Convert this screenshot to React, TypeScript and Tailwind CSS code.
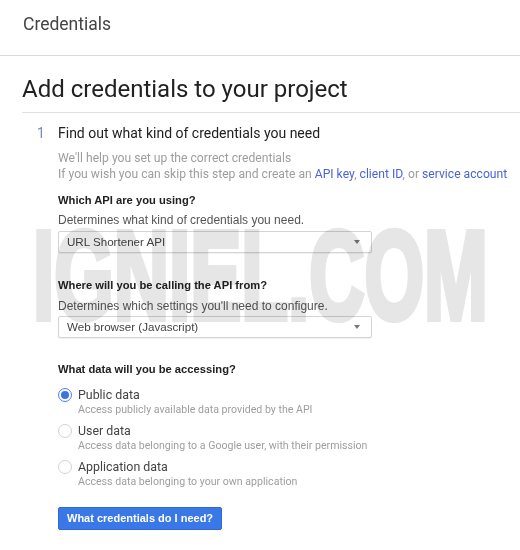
import React from 'react';

const roboto = "font-['Roboto','Liberation_Sans',sans-serif]";
const arial = "font-['Liberation_Sans','Arial',sans-serif]";

const dataOptions = [
  { label: 'Public data', desc: 'Access publicly available data provided by the API', checked: true },
  { label: 'User data', desc: 'Access data belonging to a Google user, with their permission', checked: false },
  { label: 'Application data', desc: 'Access data belonging to your own application', checked: false },
];

const Select = ({ value }: { value: string }) => (
  <div className="w-[314px] h-[22px] flex items-center justify-between pl-[8px] pr-[11px] border border-[#d4d4d4] rounded-[2px] bg-white shadow-[0_1px_1px_rgba(0,0,0,0.06)]">
    <span className={`${arial} text-[11.6px] leading-[20px] text-[#444]`}>{value}</span>
    <span className="w-0 h-0 border-l-[3.5px] border-r-[3.5px] border-t-[4px] border-l-transparent border-r-transparent border-t-[#777]" />
  </div>
);

const Radio = ({ checked }: { checked: boolean }) =>
  checked ? (
    <span className="w-[14px] h-[14px] rounded-full border-[1.5px] border-[#4d7fe9] flex items-center justify-center bg-white">
      <span className="w-[8px] h-[8px] rounded-full bg-[#3e73e6]" />
    </span>
  ) : (
    <span className="w-[14px] h-[14px] rounded-full border border-[#d2d2d2] bg-white" />
  );

export default function App() {
  return (
    <div className="relative w-[520px] h-[550px] bg-white overflow-hidden">
      {/* Header */}
      <div className="h-[56px] border-b border-[#d9d9d9] pl-[23px] pt-[13px]">
        <div className={`${roboto} text-[17.5px] leading-[22px] text-[#444]`}>Credentials</div>
      </div>

      {/* Title */}
      <div className="ml-[22px] border-b border-[#e0e0e0]">
        <h1 className={`${roboto} pt-[17px] pb-[7px] text-[24px] leading-[32px] text-[#212121]`}>
          Add credentials to your project
        </h1>
      </div>

      {/* Step 1 */}
      <div className="pt-[10px] flex">
        <div className={`${roboto} w-[58px] pl-[37px] text-[14px] leading-[20px] text-[#7986cb]`}>1</div>
        <div className="flex flex-col">
          <div className={`${roboto} text-[14px] leading-[20px] text-[#212121]`}>
            Find out what kind of credentials you need
          </div>

          <div className={`${roboto} mt-[7px] text-[12.15px] leading-[16px] text-[#9e9e9e]`}>
            <div>We'll help you set up the correct credentials</div>
            <div className="whitespace-nowrap">
              If you wish you can skip this step and create an{' '}
              <span className="text-[#4a64d4]">API key</span>,{' '}
              <span className="text-[#4a64d4]">client ID</span>, or{' '}
              <span className="text-[#4a64d4]">service account</span>
            </div>
          </div>

          <div className={`${arial} mt-[10px] text-[11.2px] leading-[16px] font-bold text-[#212121]`}>
            Which API are you using?
          </div>
          <div className={`${arial} mt-[4px] mb-[3px] text-[12px] leading-[16px] text-[#555]`}>
            Determines what kind of credentials you need.
          </div>
          <Select value="URL Shortener API" />

          <div className={`${arial} mt-[24px] text-[11.2px] leading-[16px] font-bold text-[#212121]`}>
            Where will you be calling the API from?
          </div>
          <div className={`${arial} mt-[5px] mb-[2px] text-[12px] leading-[16px] text-[#555]`}>
            Determines which settings you'll need to configure.
          </div>
          <Select value="Web browser (Javascript)" />

          <div className={`${arial} mt-[23px] text-[11.2px] leading-[16px] font-bold text-[#212121]`}>
            What data will you be accessing?
          </div>

          <div className="mt-[10px] flex flex-col gap-[6px]">
            {dataOptions.map((o) => (
              <div key={o.label} className="flex">
                <div className="h-[16px] flex items-center">
                  <Radio checked={o.checked} />
                </div>
                <div className="ml-[6px]">
                  <div className={`${roboto} text-[12.4px] leading-[16px] text-[#444]`}>{o.label}</div>
                  <div className={`${roboto} text-[10.6px] leading-[14px] text-[#9e9e9e]`}>{o.desc}</div>
                </div>
              </div>
            ))}
          </div>

          <button
            className={`${arial} mt-[18px] self-start h-[23px] px-[8px] rounded-[2px] bg-[#3b78e7] border border-[#3367d6] text-white text-[11px] font-bold leading-[21px]`}
          >
            What credentials do I need?
          </button>
        </div>
      </div>

      {/* Watermark */}
      <div
        className={`${arial} pointer-events-none absolute left-[33px] top-[213px] origin-left scale-x-[0.607] text-[126px] leading-none font-bold whitespace-nowrap text-[#e6e6e6] [-webkit-text-stroke:6px_#e6e6e6] mix-blend-multiply`}
      >
        IGNIEL.COM
      </div>
    </div>
  );
}
